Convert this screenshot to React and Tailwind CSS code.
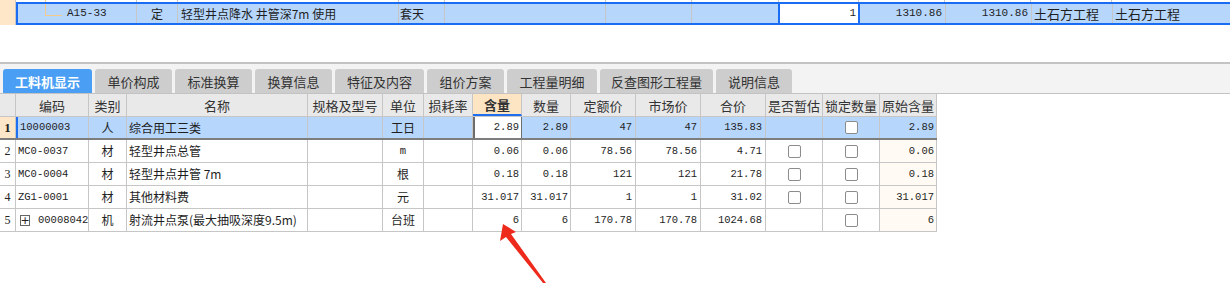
import React from "react";

const MONO = "font-['Liberation_Mono','Noto_Sans_CJK_SC',monospace] text-[10.5px]";

function Cell({ w, className = "", children }) {
  return (
    <div
      className={`box-border h-full shrink-0 flex items-center overflow-hidden whitespace-nowrap border-r border-[#c6c6c6] ${className}`}
      style={{ width: w }}
    >
      {children}
    </div>
  );
}

function Check() {
  return <div className="w-[13px] h-[13px] border border-[#8c8c8c] rounded-[2px] bg-white" />;
}

const COLS = [16, 73, 38, 181, 75, 41, 49, 49, 49, 65, 65, 65, 57, 57, 57];
const HEAD = ["", "编码", "类别", "名称", "规格及型号", "单位", "损耗率", "含量", "数量", "定额价", "市场价", "合价", "是否暂估", "锁定数量", "原始含量"];

const ROWS = [
  { n: "1", code: "10000003", t: "人", name: "综合用工三类", unit: "工日", q: "2.89", qty: "2.89", p: "47", mp: "47", tot: "135.83", est: false, orig: "2.89" },
  { n: "2", code: "MC0-0037", t: "材", name: "轻型井点总管", unit: "m", q: "0.06", qty: "0.06", p: "78.56", mp: "78.56", tot: "4.71", est: true, orig: "0.06" },
  { n: "3", code: "MC0-0004", t: "材", name: "轻型井点井管 7m", unit: "根", q: "0.18", qty: "0.18", p: "121", mp: "121", tot: "21.78", est: true, orig: "0.18" },
  { n: "4", code: "ZG1-0001", t: "材", name: "其他材料费", unit: "元", q: "31.017", qty: "31.017", p: "1", mp: "1", tot: "31.02", est: true, orig: "31.017" },
  { n: "5", code: "00008042", t: "机", name: "射流井点泵(最大抽吸深度9.5m)", unit: "台班", q: "6", qty: "6", p: "170.78", mp: "170.78", tot: "1024.68", est: false, orig: "6", plus: true },
];

const TABS = [
  ["工料机显示", 89],
  ["单价构成", 77],
  ["标准换算", 77],
  ["换算信息", 77],
  ["特征及内容", 89],
  ["组价方案", 77],
  ["工程量明细", 90],
  ["反查图形工程量", 113],
  ["说明信息", 76],
];

function DataRow({ r }) {
  const sel = r.n === "1";
  const rowBg = sel ? "bg-[#b6d6fc]" : "bg-white";
  const bb = sel ? "border-b-2 border-b-[#7d7d7d]" : "border-b border-b-[#c6c6c6]";
  return (
    <div className={`flex h-[23px] ${bb} box-border`}>
      <Cell w={16} className={`${sel ? "bg-[#fde7c8] font-bold text-[13px] font-['Liberation_Serif',serif]" : "bg-white font-['Liberation_Serif',serif] text-[12px]"} justify-center text-[#222]`}>
        {r.n}
      </Cell>
      <Cell w={73} className={`${rowBg} ${MONO} pl-[2px] text-[#222] ${sel ? "border-l-2 border-l-[#1f6ff0]" : ""}`}>
        {r.plus && (
          <span className="shrink-0 box-border mr-[8px] ml-[2px] w-[10px] h-[11px] border border-[#666] flex items-center justify-center text-[11px] leading-none font-['DejaVu_Sans',sans-serif]">+</span>
        )}
        {r.code}
      </Cell>
      <Cell w={38} className={`${rowBg} justify-center`}>{r.t}</Cell>
      <Cell w={181} className={`${rowBg} pl-[2px]`}>{r.name}</Cell>
      <Cell w={75} className={rowBg} />
      <Cell w={41} className={`${rowBg} justify-center ${r.unit === "m" ? MONO : ""}`}>{r.unit}</Cell>
      <Cell w={49} className={rowBg} />
      <Cell
        w={49}
        className={`${sel ? "bg-white border-x-2 border-x-[#6d6d6d]" : rowBg} ${MONO} justify-end pr-[2px]`}
      >
        {r.q}
      </Cell>
      <Cell w={49} className={`${rowBg} ${MONO} justify-end pr-[2px]`}>{r.qty}</Cell>
      <Cell w={65} className={`${rowBg} ${MONO} justify-end pr-[3px]`}>{r.p}</Cell>
      <Cell w={65} className={`${rowBg} ${MONO} justify-end pr-[3px]`}>{r.mp}</Cell>
      <Cell w={65} className={`${rowBg} ${MONO} justify-end pr-[3px]`}>{r.tot}</Cell>
      <Cell w={57} className={`${rowBg} justify-center`}>{r.est && <Check />}</Cell>
      <Cell w={57} className={`${rowBg} justify-center`}><Check /></Cell>
      <Cell w={57} className={`${sel ? rowBg : "bg-[#fffaf3]"} ${MONO} justify-end pr-[2px]`}>{r.orig}</Cell>
    </div>
  );
}

export default function App() {
  return (
    <div className="relative w-[1230px] h-[291px] bg-white overflow-hidden font-['Noto_Sans_CJK_SC',sans-serif] text-[12px] text-[#1e1e1e] leading-none">
      {/* previous row fragment */}
      <div className="flex h-[2px]">
        <div className="shrink-0 w-[16px] bg-[#fde7c8] border-r border-[#c6c6c6]" />
        <div className="shrink-0 w-[29px]" />
        <div className="shrink-0 w-[1px] bg-[#f3c98c]" />
        <div className="shrink-0 w-[91px] border-r border-[#c6c6c6]" />
        <div className="shrink-0 w-[41px] border-r border-[#c6c6c6]" />
        <div className="shrink-0 w-[221px] border-r border-[#c6c6c6]" />
        <div className="shrink-0 w-[46px] border-r border-[#c6c6c6]" />
        <div className="shrink-0 w-[161px] border-r border-[#c6c6c6]" />
        <div className="shrink-0 w-[86px] border-r border-[#c6c6c6]" />
        <div className="shrink-0 w-[87px] border-r border-[#c6c6c6]" />
        <div className="shrink-0 w-[80px] border-r border-[#c6c6c6]" />
        <div className="shrink-0 w-[86px] border-r border-[#c6c6c6]" />
        <div className="shrink-0 w-[86px] border-r border-[#c6c6c6]" />
        <div className="shrink-0 w-[81px] border-r border-[#c6c6c6]" />
      </div>

      {/* selected top row */}
      <div className="flex h-[23px]">
        <div className="shrink-0 w-[16px] bg-[#fde7c8] border-r border-[#c6c6c6] box-border" />
        <div className="w-[1220px] shrink-0 box-border border-2 border-[#1a6cf2] bg-[#b6d6fc] flex h-full">
          <Cell w={119} className="relative pl-[49px] font-['Liberation_Mono',monospace] text-[11px]">
            <div className="absolute left-[27px] top-[-2px] w-[1px] h-[14px] bg-[#f3c98c]" />
            <div className="absolute left-[27px] top-[11px] w-[17px] h-[1px] bg-[#f3c98c]" />
            A15-33
          </Cell>
          <Cell w={41} className="justify-center">定</Cell>
          <Cell w={221} className="pl-[3px]">轻型井点降水 井管深7m 使用</Cell>
          <Cell w={46} className="pl-[1px]">套天</Cell>
          <Cell w={161} />
          <Cell w={86} />
          <Cell w={86} className="border-r-0" />
          <div className="box-border h-full w-[82px] shrink-0 bg-white border-x-2 border-[#1a6cf2] flex items-center justify-end pr-[2px] font-['Liberation_Mono',monospace] text-[11px]">
            1
          </div>
          <Cell w={86} className="justify-end pr-[3px] font-['Liberation_Mono',monospace] text-[11px]">1310.86</Cell>
          <Cell w={86} className="justify-end pr-[3px] font-['Liberation_Mono',monospace] text-[11px]">1310.86</Cell>
          <Cell w={81} className="pl-[2px] text-[13px]">土石方工程</Cell>
          <Cell w={200} className="pl-[2px] text-[13px] border-r-0">土石方工程</Cell>
        </div>
      </div>

      <div className="h-[37px]" />

      {/* tab bar */}
      <div className="h-[32px] box-border border-t-2 border-[#c3c3c3] border-b border-b-[#c3c3c3] bg-[#f3f3f3] flex items-end pl-[3px] gap-[3px]">
        {TABS.map(([t, w], i) => (
          <div
            key={t}
            className={`shrink-0 h-[24px] flex items-center justify-center rounded-t-[3px] text-[13px] ${
              i === 0 ? "bg-[#4a9ff4] text-white font-bold" : "bg-[#cdcdcd] text-[#333]"
            }`}
            style={{ width: w }}
          >
            {t}
          </div>
        ))}
      </div>

      {/* table header */}
      <div className="flex h-[23px] border-b border-[#c6c6c6] box-border w-[937px]">
        {HEAD.map((h, i) => (
          <Cell
            key={i}
            w={COLS[i]}
            className={`justify-center text-[13px] text-[#333] ${
              i === 7 ? "bg-[#fde5c4] font-bold border-b-2 border-b-[#1f6ff0]" : "bg-[#e9e9e9]"
            }`}
          >
            {h}
          </Cell>
        ))}
      </div>

      <div className="w-[937px]">
        {ROWS.map((r) => (
          <DataRow key={r.n} r={r} />
        ))}
      </div>

      {/* red annotation arrow */}
      <svg className="absolute left-0 top-0 pointer-events-none" width="1230" height="291">
        <polygon
          points="503,224 516,232 511,234 546,283 543,283 506,237 500,241"
          fill="#ee2a1c"
        />
      </svg>
    </div>
  );
}
